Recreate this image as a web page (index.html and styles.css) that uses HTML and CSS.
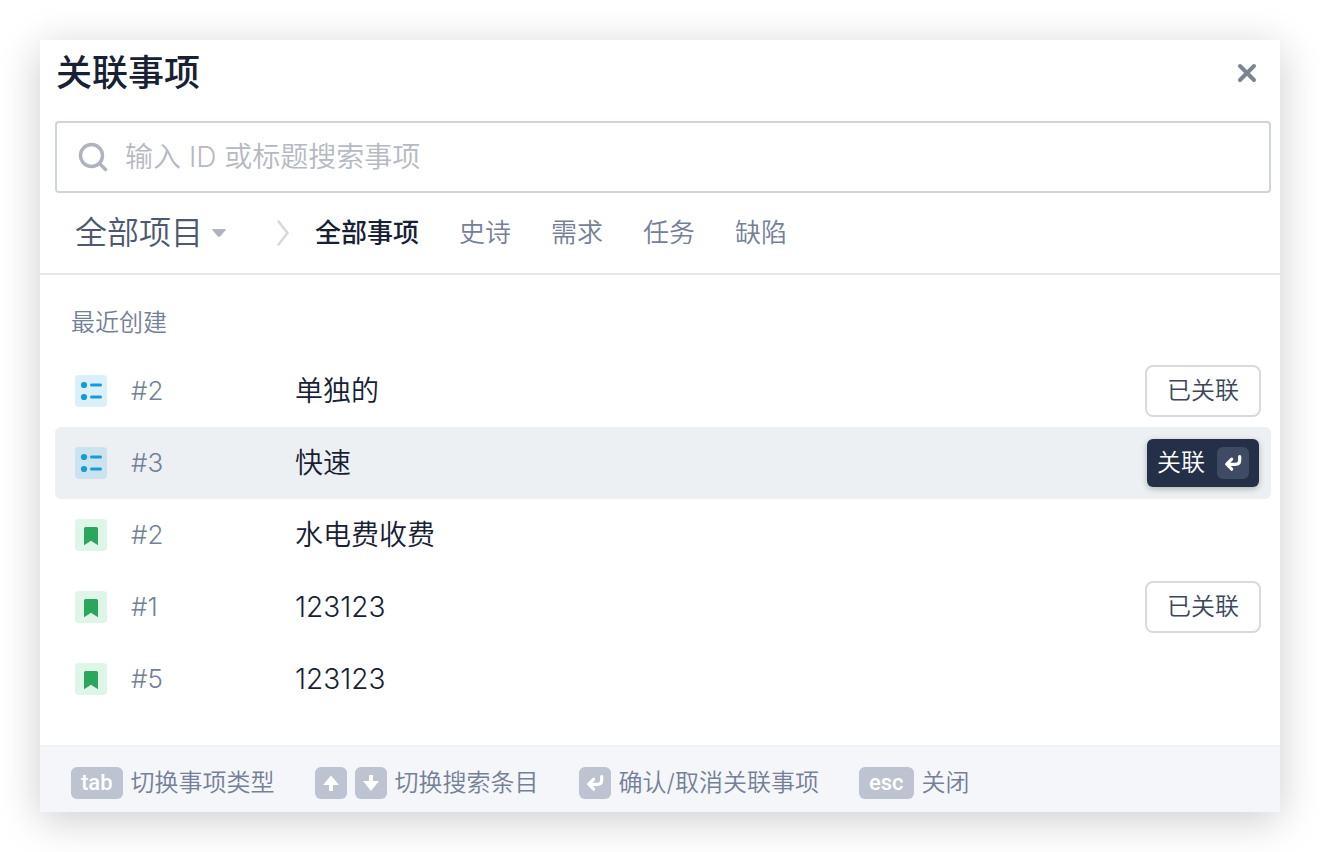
FILE: index.html
```html
<!DOCTYPE html>
<html lang="zh-CN">
<head>
  <meta charset="UTF-8">
  <title>关联事项</title>
  <link rel="stylesheet" href="styles.css">
</head>
<body>

  <!-- shared icons -->
  <svg class="sprite" aria-hidden="true">
    <symbol id="icon-task" viewBox="0 0 32 32">
      <circle cx="9" cy="10" r="3.1"/>
      <circle cx="9" cy="22" r="3.1"/>
      <path d="M16.500 10h9M16.500 22h9" stroke="currentColor" stroke-width="3" stroke-linecap="round"/>
    </symbol>
    <symbol id="icon-story" viewBox="0 0 32 32">
      <path d="M10.500 8h11A1.500 1.500 0 0 1 23 9.500V26.300L16 21.800 9 26.300V9.500A1.500 1.500 0 0 1 10.500 8z"/>
    </symbol>
    <symbol id="icon-enter" viewBox="0 0 32 32">
      <path d="M22.700 9.500v3.500q0 4.300-4.300 4.300H10M14.700 12.200L9.700 17.200l5 5" fill="none" stroke="currentColor" stroke-width="3.200" stroke-linecap="round" stroke-linejoin="round"/>
    </symbol>
  </svg>

  <div class="modal" role="dialog" aria-labelledby="modalTitle">
    <header class="modal-header">
      <h1 id="modalTitle">关联事项</h1>
      <button class="close" aria-label="关闭">
        <svg width="20" height="20" viewBox="0 0 20 20"><path d="M3 3l14 14M17 3L3 17" stroke="currentColor" stroke-width="4" stroke-linecap="round"/></svg>
      </button>
    </header>

    <label class="search">
      <svg width="32" height="32" viewBox="0 0 32 32"><circle cx="14.500" cy="14.500" r="11" fill="none" stroke="currentColor" stroke-width="3.400"/><path d="M22.500 22.500l6 6" stroke="currentColor" stroke-width="3.400" stroke-linecap="round"/></svg>
      <input type="text" aria-label="搜索事项" placeholder="输入 ID 或标题搜索事项">
    </label>

    <nav class="filters">
      <div class="project">
        <select aria-label="项目">
          <option>全部项目</option>
        </select>
        <svg width="16" height="10" viewBox="0 0 16 10"><path d="M2 1h12q1.700 0 .5 1.300L9.300 8.200Q8 9.500 6.700 8.200L1.500 2.300Q.3 1 2 1z" fill="currentColor"/></svg>
      </div>
      <svg class="chevron" width="14" height="28" viewBox="0 0 14 28"><path d="M2.500 2.500L11.500 14l-9 11.500" fill="none" stroke="currentColor" stroke-width="2.600" stroke-linecap="round" stroke-linejoin="round"/></svg>
      <div class="tabs">
        <button class="active">全部事项</button>
        <button>史诗</button>
        <button>需求</button>
        <button>任务</button>
        <button>缺陷</button>
      </div>
    </nav>

    <section class="results">
      <h2>最近创建</h2>
      <ul>
        <li class="item">
          <svg class="type task"><use href="#icon-task"/></svg>
          <span class="id">#2</span>
          <span class="name">单独的</span>
          <button class="linked">已关联</button>
        </li>
        <li class="item selected">
          <svg class="type task"><use href="#icon-task"/></svg>
          <span class="id">#3</span>
          <span class="name">快速</span>
          <button class="link">关联<svg class="enter"><use href="#icon-enter"/></svg></button>
        </li>
        <li class="item">
          <svg class="type story"><use href="#icon-story"/></svg>
          <span class="id">#2</span>
          <span class="name">水电费收费</span>
        </li>
        <li class="item">
          <svg class="type story"><use href="#icon-story"/></svg>
          <span class="id">#1</span>
          <span class="name">123123</span>
          <button class="linked">已关联</button>
        </li>
        <li class="item">
          <svg class="type story"><use href="#icon-story"/></svg>
          <span class="id">#5</span>
          <span class="name">123123</span>
        </li>
      </ul>
    </section>

    <footer class="shortcuts">
      <div class="shortcut"><kbd>tab</kbd>切换事项类型</div>
      <div class="shortcut">
        <kbd class="key"><svg viewBox="0 0 32 32"><path d="M16 8.500l8 9.500h-6v6h-4v-6H8z" fill="currentColor"/></svg></kbd>
        <kbd class="key"><svg viewBox="0 0 32 32"><path d="M16 24l8-10h-6V8h-4v6H8z" fill="currentColor"/></svg></kbd>
        切换搜索条目
      </div>
      <div class="shortcut"><kbd class="key"><svg><use href="#icon-enter"/></svg></kbd>确认/取消关联事项</div>
      <div class="shortcut"><kbd>esc</kbd>关闭</div>
    </footer>
  </div>

</body>
</html>
```
FILE: styles.css
```css
* {
  box-sizing: border-box;
}

body {
  margin: 0;
  padding: 40px;
  background: #fff;
  color: #182133;
  font-family: Inter, "Noto Sans CJK SC", sans-serif;
  font-weight: 350;
}

button, input, select {
  font-family: inherit;
  font-weight: inherit;
  color: inherit;
  background: none;
  border: none;
  padding: 0;
  margin: 0;
}

button {
  cursor: pointer;
}

svg {
  display: block;
  flex: none;
}

.sprite {
  position: absolute;
  width: 0;
  height: 0;
}

.modal {
  background: #fff;
  box-shadow: 0 8px 40px rgba(0, 0, 0, 0.2);
}

.modal-header {
  display: flex;
  align-items: center;
  justify-content: space-between;
  padding: 9px 23px 24px 16px;
}

.modal-header h1 {
  margin: 0;
  font-size: 36px;
  line-height: 48px;
  font-weight: 500;
}

.close {
  color: #7c8493;
}

.search {
  display: flex;
  align-items: center;
  gap: 16px;
  height: 72px;
  margin: 0 9px 0 15px;
  padding: 0 20px;
  border: 2px solid #d0d4df;
  border-radius: 4px;
  color: #afb3bd;
}

.search input {
  flex: 1;
  min-width: 0;
  outline: none;
  color: #182133;
  font-size: 28px;
  line-height: 40px;
}

.search input::placeholder {
  color: #b5b9c1;
}

.filters {
  display: flex;
  align-items: center;
  height: 82px;
  padding: 0 35px;
  border-bottom: 2px solid #e5e6e9;
}

.project {
  display: flex;
  align-items: center;
  color: #afb3bd;
}

.project select {
  appearance: none;
  width: 136px;
  color: #4d5970;
  font-size: 32px;
  line-height: 44px;
}

.chevron {
  margin: 0 25px 0 49px;
  color: #d7d9de;
}

.tabs {
  display: flex;
  gap: 40px;
}

.tabs button {
  color: #748098;
  font-size: 26px;
  line-height: 36px;
}

.tabs .active {
  color: #182133;
  font-weight: 500;
}

.results {
  padding: 32px 9px 30px 15px;
}

.results h2 {
  margin: 0 0 16px;
  padding-left: 16px;
  color: #748098;
  font-size: 24px;
  line-height: 32px;
  font-weight: inherit;
}

.results ul {
  list-style: none;
  margin: 0;
  padding: 0;
}

.item {
  display: flex;
  align-items: center;
  height: 72px;
  padding: 0 10px 0 20px;
  border-radius: 6px;
}

.item.selected {
  background: #ecf0f3;
}

.type {
  width: 32px;
  height: 32px;
  margin-right: 24px;
  border-radius: 4px;
  fill: currentColor;
}

.task {
  color: #149bdc;
  background: rgba(20, 155, 220, 0.15);
}

.story {
  color: #2ba65d;
  background: #dff5e7;
}

.id {
  width: 164px;
  color: #748098;
  font-size: 26px;
  line-height: 40px;
}

.name {
  flex: 1;
  font-size: 28px;
  line-height: 40px;
}

.linked {
  height: 52px;
  padding: 0 20px;
  border: 2px solid #d9dae0;
  border-radius: 8px;
  background: #fff;
  color: #3b465c;
  font-size: 24px;
  line-height: 32px;
}

.link {
  display: flex;
  align-items: center;
  gap: 12px;
  height: 48px;
  margin-right: 2px;
  padding: 0 10px;
  border-radius: 6px;
  background: #242f48;
  box-shadow: 0 2px 6px rgba(0, 0, 0, 0.25);
  color: #fff;
  font-size: 24px;
  line-height: 32px;
}

.enter {
  width: 32px;
  height: 32px;
  border-radius: 6px;
  background: #3f4a63;
}

.shortcuts {
  display: flex;
  flex-wrap: wrap;
  gap: 8px 40px;
  padding: 20px 31px 13px;
  border-top: 2px solid #f0f2f3;
  background: #f4f6fa;
  color: #748098;
}

.shortcut {
  display: flex;
  align-items: center;
  gap: 8px;
  font-size: 24px;
  line-height: 32px;
}

kbd {
  padding: 0 10px;
  border-radius: 6px;
  background: #bdc3d0;
  color: #fff;
  font-family: Roboto, sans-serif;
  font-size: 22px;
  font-weight: 500;
}

.key {
  padding: 0;
}

.key svg {
  width: 32px;
  height: 32px;
}
```
